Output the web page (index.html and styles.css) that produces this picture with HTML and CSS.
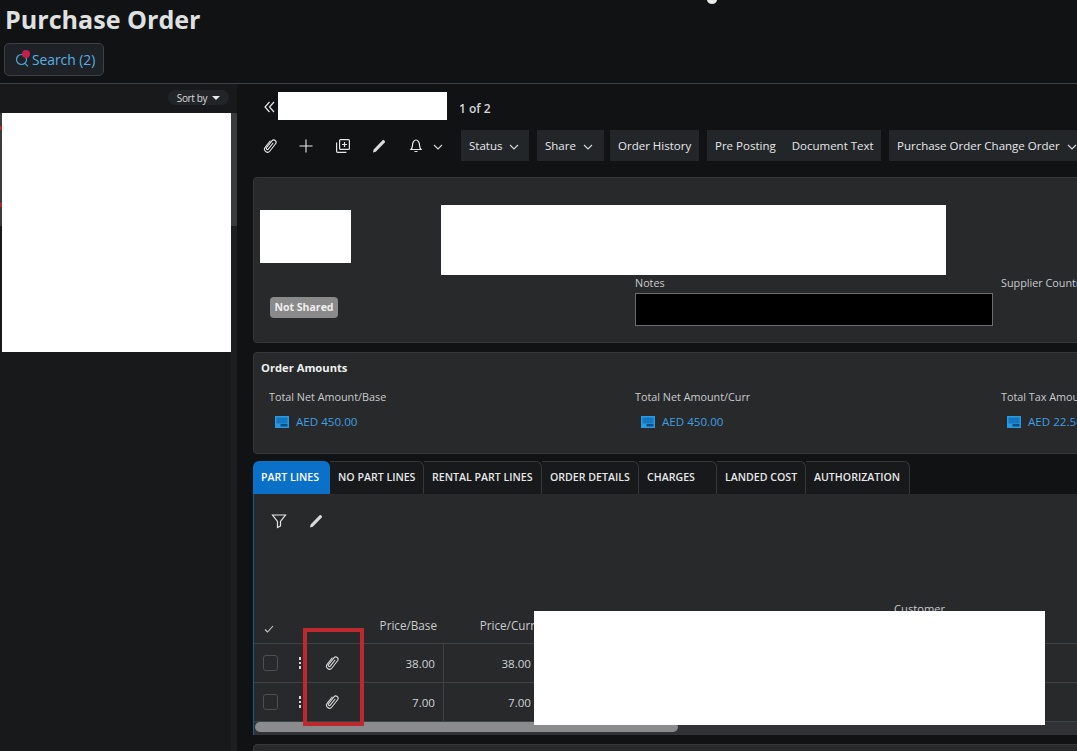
FILE: index.html
```html
<!DOCTYPE html>
<html lang="en">
<head>
<meta charset="utf-8">
<title>Purchase Order</title>
<link rel="stylesheet" href="styles.css">
</head>
<body>
<svg class="defs" width="0" height="0" aria-hidden="true">
  <symbol id="clip" viewBox="0 0 16 16">
    <g transform="rotate(38 8 8)" fill="none" stroke="currentColor" stroke-width="1.100" stroke-linecap="round">
      <path d="M5 4v8a3 3 0 0 0 6 0V2.800a2.300 2.300 0 0 0-4.600 0v8.700a1.100 1.100 0 0 0 2.200 0V4"/>
    </g>
  </symbol>
  <symbol id="pencil" viewBox="0 0 16 16">
    <path d="M2 14.500l.6-3L11.600 2.200a.9.9 0 0 1 1.300 0l.9.9a.9.9 0 0 1 0 1.300L4.800 13.700z" fill="currentColor"/>
  </symbol>
  <symbol id="chev" viewBox="0 0 10 6">
    <path d="M1 1l4 4 4-4" fill="none" stroke="currentColor" stroke-width="1.100"/>
  </symbol>
  <symbol id="money" viewBox="0 0 14 12">
    <rect width="14" height="12" fill="#2a9ae0"/>
    <rect x="1.500" y="1.500" width="11" height="6" fill="#1577c0"/>
    <rect x="5.500" y="8" width="7" height="2.500" fill="#0d4f80"/>
  </symbol>
</svg>

<header class="page-head">
  <h1 class="page-title">Purchase Order</h1>
  <button class="search-btn" type="button">
    <span class="search-icon">
      <svg width="14" height="15" viewBox="0 0 14 15"><circle cx="5.500" cy="7.500" r="5" fill="none" stroke="#4ea6d8" stroke-width="1.200"/><path d="M9 11.300l3 3" stroke="#4ea6d8" stroke-width="1.200"/></svg>
      <span class="search-dot"></span>
    </span>
    Search (2)
  </button>
</header>

<div class="workspace">
  <aside class="sidebar">
    <div class="sort-row">
      <span class="sort-pill">Sort by <span class="caret"></span></span>
    </div>
    <div class="side-edge"><span class="side-mark side-mark-a"></span><span class="side-mark side-mark-b"></span></div>
    <div class="side-track"><div class="side-thumb"></div></div>
  </aside>

  <main class="content">
    <div class="pager">
      <span class="pager-back">
        <svg width="11" height="12" viewBox="0 0 11 12"><path d="M5.500 1L1 6l4.500 5M10 1L5.500 6l4.500 5" fill="none" stroke="#e4e6e7" stroke-width="1.200"/></svg>
      </span>
      <span class="pager-blank"></span>
      <span class="pager-count">1 of 2</span>
    </div>

    <div class="actions">
      <span class="act act-first"><svg width="16" height="16"><use href="#clip"/></svg></span>
      <span class="act act-plus"><svg width="14" height="14" viewBox="0 0 14 14"><path d="M7 .5v13M.5 7h13" stroke="#e8eaeb" stroke-width="1.100"/></svg></span>
      <span class="act act-copy"><svg width="16" height="16" viewBox="0 0 16 16" fill="none" stroke="#e4e6e7" stroke-width="1.200"><rect x="4.600" y="1.600" width="9.800" height="9.800" rx="1"/><path d="M1.600 4.600v8.800a1 1 0 0 0 1 1h8.800M9.500 4v5M7 6.500h5"/></svg></span>
      <span class="act act-pencil"><svg width="16" height="16"><use href="#pencil"/></svg></span>
      <span class="act act-bell">
        <svg width="14" height="15" viewBox="0 0 14 15" fill="none" stroke="#e4e6e7" stroke-width="1.200"><path d="M2 11.500c1-1 1.500-2 1.500-4.500S5 2 7 2s3.500 2.500 3.500 5 .5 3.500 1.500 4.500zM5.500 13.500h3"/></svg>
        <svg class="chev-s" width="10" height="6"><use href="#chev"/></svg>
      </span>
      <span class="btn btn-status">Status <svg class="chev-s" width="10" height="6"><use href="#chev"/></svg></span>
      <span class="btn btn-share">Share <svg class="chev-s" width="10" height="6"><use href="#chev"/></svg></span>
      <span class="btn btn-history">Order History</span>
      <span class="btn btn-double"><span>Pre Posting</span><span>Document Text</span></span>
      <span class="btn btn-change">Purchase Order Change Order <svg class="chev-s" width="10" height="6"><use href="#chev"/></svg></span>
    </div>

    <section class="card card-info">
      <div class="cols">
        <div class="col col-badge"><span class="badge">Not Shared</span></div>
        <div class="col col-notes">
          <div class="label">Notes</div>
          <div class="notes-box"></div>
        </div>
        <div class="col"><div class="label">Supplier Country</div></div>
      </div>
    </section>

    <section class="card card-amounts">
      <h2 class="card-title">Order Amounts</h2>
      <div class="cols">
        <div class="col col-amt-first">
          <div class="label">Total Net Amount/Base</div>
          <div class="amount"><svg width="14" height="12"><use href="#money"/></svg>AED 450.00</div>
        </div>
        <div class="col">
          <div class="label">Total Net Amount/Curr</div>
          <div class="amount"><svg width="14" height="12"><use href="#money"/></svg>AED 450.00</div>
        </div>
        <div class="col">
          <div class="label">Total Tax Amount</div>
          <div class="amount"><svg width="14" height="12"><use href="#money"/></svg>AED 22.50</div>
        </div>
      </div>
    </section>

    <nav class="tabs">
      <span class="tab tab-active tab-1">PART LINES</span>
      <span class="tab tab-2">NO PART LINES</span>
      <span class="tab tab-3">RENTAL PART LINES</span>
      <span class="tab tab-4">ORDER DETAILS</span>
      <span class="tab tab-5">CHARGES</span>
      <span class="tab tab-6">LANDED COST</span>
      <span class="tab tab-7">AUTHORIZATION</span>
    </nav>

    <section class="panel">
      <div class="panel-tools">
        <svg width="16" height="16" viewBox="0 0 16 16"><path d="M1.500 2h13L9.500 8.500V13l-3 1.500V8.500z" fill="none" stroke="#e4e6e7" stroke-width="1.200"/></svg>
        <svg class="tool-pencil" width="16" height="16"><use href="#pencil"/></svg>
      </div>
      <div class="table">
        <div class="row row-head">
          <span class="cell-check"><svg width="10" height="8" viewBox="0 0 10 8"><path d="M1 4.500l2.500 2.500L9 1" fill="none" stroke="#c9cccd" stroke-width="1.100"/></svg></span>
          <span></span>
          <span></span>
          <span class="num">Price/Base</span>
          <span class="num">Price/Curr</span>
          <span></span>
          <span class="head-customer">Customer</span>
        </div>
        <div class="row row-body">
          <span class="cell-check"><span class="box"></span></span>
          <span class="dots"><i></i><i></i><i></i></span>
          <span class="cell-clip"><svg width="16" height="16"><use href="#clip"/></svg></span>
          <span class="num val bordered">38.00</span>
          <span class="num val bordered">38.00</span>
          <span></span><span></span>
        </div>
        <div class="row row-body">
          <span class="cell-check"><span class="box"></span></span>
          <span class="dots"><i></i><i></i><i></i></span>
          <span class="cell-clip"><svg width="16" height="16"><use href="#clip"/></svg></span>
          <span class="num val bordered">7.00</span>
          <span class="num val bordered">7.00</span>
          <span></span><span></span>
        </div>
      </div>
      <div class="h-track"><div class="h-thumb"></div></div>
    </section>

    <section class="card card-next"></section>
  </main>
</div>

<div class="cover cover-side"></div>
<div class="cover cover-logo"></div>
<div class="cover cover-name"></div>
<div class="cover cover-table"></div>
<div class="annotation"></div>
<div class="cursor-dot"></div>
</body>
</html>
```

FILE: styles.css
```css
* { box-sizing: border-box; }
html, body { height: 100%; }
body {
  margin: 0;
  width: 1077px;
  height: 751px;
  overflow: hidden;
  position: relative;
  background: #111213;
  color: #e2e4e5;
  font-family: "Open Sans", "Noto Sans", sans-serif;
  font-size: 12px;
}
.defs { position: absolute; }

.page-head { height: 84px; padding: 3px 4px 0; border-bottom: 1px solid #3a4045; }
.page-title {
  margin: 0 0 0 1px;
  font-size: 25.100px;
  line-height: 32px;
  font-weight: 700;
  color: #dfe0e0;
}
.search-btn {
  margin-top: 8px;
  height: 33px;
  width: 100px;
  padding: 0 0 0 11px;
  display: flex;
  align-items: center;
  gap: 1px;
  background: #1e2226;
  border: 1px solid #3b4147;
  border-radius: 5px;
  color: #58b0e4;
  font: 13.800px "Open Sans", sans-serif;
}
.search-icon { position: relative; display: flex; width: 15px; height: 15px; }
.search-dot {
  position: absolute;
  left: 6px; top: -2px;
  width: 8px; height: 8px;
  border-radius: 50%;
  background: #c2204f;
}

.workspace { display: flex; height: 667px; }
.sidebar { width: 237px; flex: none; position: relative; background: #18191b; }
.sort-row { height: 29px; display: flex; justify-content: flex-end; align-items: center; padding: 0 8px 2px 0; }
.sort-pill {
  height: 15px;
  width: 61px;
  display: flex;
  align-items: center;
  justify-content: center;
  gap: 5px;
  border-radius: 8px;
  background: #222528;
  font-size: 10px;
  letter-spacing: -.35px;
  color: #d8dadb;
}
.caret { border: 4px solid transparent; border-top: 4px solid #e8e9ea; border-bottom: 0; }
.side-edge { position: absolute; left: 0; top: 29px; width: 2px; height: 113px; background: #3a3b3d; }
.side-mark { position: absolute; left: 0; width: 2px; height: 4px; background: #b5252b; }
.side-mark-a { top: 13px; }
.side-mark-b { top: 90px; }
.side-track { position: absolute; right: 0; top: 29px; width: 6px; height: 638px; background: #1d1e20; }
.side-thumb { width: 100%; height: 113px; background: #3a3b3d; }

.content { flex: 1; min-width: 0; padding: 7px 0 0 16px; overflow: hidden; }

.pager { height: 30px; display: flex; align-items: center; padding-left: 11px; }
.pager-back { width: 14px; display: flex; padding-top: 2px; }
.pager-blank { width: 169px; height: 28px; background: #fff; }
.pager-count { margin-left: 12px; padding-top: 4px; font-size: 12px; font-weight: 600; color: #d5d7d8; }

.actions { display: flex; align-items: center; height: 31px; margin-top: 9px; white-space: nowrap; width: 900px; }
.act { color: #e4e6e7; display: flex; align-items: center; flex: none; }
.act-first { padding-left: 9px; width: 46px; }
.act-plus { width: 36px; }
.act-copy { width: 36px; }
.act-pencil { width: 38px; color: #d8dadb; }
.act-bell { width: 52px; gap: 10px; }
.act-bell .chev-s { margin-top: 2px; }
.btn {
  height: 31px;
  flex: none;
  display: flex;
  align-items: center;
  padding-left: 8px;
  margin-right: 8px;
  background: #232629;
  color: #e6e8e9;
  font-size: 11.500px;
}
.chev-s { color: #d8dadb; margin-left: 7px; margin-top: 2px; }
.act .chev-s { margin-left: 0; }
.btn-status { width: 68px; }
.btn-share { width: 67px; margin-right: 6px; }
.btn-history { width: 89px; }
.btn-double { width: 174px; gap: 16px; }
.btn-change { width: 220px; margin-right: 0; }

.card { background: #27292b; border: 1px solid #35383a; border-radius: 4px; width: 900px; }
.cols { display: grid; grid-template-columns: 381px 366px 1fr; }
.label { font-size: 10.800px; line-height: 14px; color: #c9cbcc; white-space: nowrap; }

.card-info { height: 166px; margin-top: 16px; padding-top: 98px; }
.col-badge { padding: 21px 0 0 16px; }
.badge {
  display: inline-block;
  height: 21px;
  width: 68px;
  line-height: 20px;
  text-align: center;
  background: #8a8a8a;
  border-radius: 4px;
  font-size: 10.500px;
  font-weight: 700;
  color: #eeeeee;
}
.notes-box { width: 358px; height: 33px; margin-top: 3px; background: #000; border: 1px solid #6b6d6e; }

.card-amounts { height: 102px; margin-top: 9px; padding-top: 6px; }
.card-title { margin: 0 0 14px 7px; font-size: 11.200px; line-height: 17px; font-weight: 700; color: #eef0f0; }
.col-amt-first { padding-left: 15px; }
.amount { display: flex; align-items: center; gap: 7px; margin-top: 10px; padding-left: 6px; line-height: 16px; font-size: 11.600px; color: #3f9fe0; white-space: nowrap; }

.tabs { display: flex; height: 33px; margin-top: 7px; }
.tab {
  height: 33px;
  padding: 0 0 2px 8px;
  display: flex;
  align-items: center;
  font-size: 10.600px;
  font-weight: 600;
  white-space: nowrap;
  color: #e6e8e9;
  background: #18191b;
  border: solid #35383a;
  border-width: 1px 1px 0 0;
  border-radius: 0 6px 0 0;
}
.tab-active { background: #0a70c8; color: #fff; border: 0; border-radius: 6px 6px 0 0; }
.tab-1 { width: 77px; }
.tab-2 { width: 94px; }
.tab-3 { width: 118px; }
.tab-4 { width: 97px; }
.tab-5 { width: 78px; }
.tab-6 { width: 89px; }
.tab-7 { width: 104px; }

.panel { width: 900px; height: 241px; background: #27292b; border-left: 1px solid #0b5d9e; display: flex; flex-direction: column; }
.panel-tools { height: 50px; padding: 19px 0 0 17px; display: flex; align-items: flex-start; gap: 21px; }
.tool-pencil { color: #d8dadb; }

.table { height: 178px; display: flex; flex-direction: column; justify-content: flex-end; }
.row { display: grid; grid-template-columns: 30px 28px 58px 74px 96px 354px 1fr; align-items: center; }
.row-head { flex: 1; height: 100px; border-bottom: 1px solid #3c4447; position: relative; }
.row-head > span { align-self: end; padding-bottom: 10px; font-size: 11.700px; color: #c9cbcc; }
.row-head .cell-check { padding-bottom: 10px; }
.row-head .num:nth-child(4) { padding-right: 7px; }
.row-head .num:nth-child(5) { padding-right: 5px; }
.row-head .head-customer { align-self: start; padding-top: 57px; font-size: 11.200px; white-space: nowrap; }
.row-body { height: 39px; border-bottom: 1px solid #3c4447; }
.cell-check { display: flex; justify-content: center; }
.box { width: 15px; height: 16px; border: 1px solid #4a5054; border-radius: 3px; margin-left: 2px; }
.dots { display: flex; flex-direction: column; align-items: center; gap: 2px; padding-left: 4px; }
.dots i { width: 2.500px; height: 2.500px; background: #d5d7d8; }
.cell-clip { display: flex; justify-content: center; color: #d6d8d9; padding-right: 18px; }
.num { text-align: right; white-space: nowrap; font-size: 11.600px; }
.val { color: #d0d2d3; line-height: 39px; height: 38px; padding-right: 8px; }
.bordered { border-right: 1px solid #3c4447; }

.h-track { height: 13px; background: #303235; }
.h-thumb { width: 423px; height: 10px; margin-left: 1px; background: #8a8b8c; border-radius: 5px; }

.card-next { height: 30px; margin-top: 9px; }

.cover { position: absolute; background: #fff; }
.cover-side { left: 2px; top: 113px; width: 229px; height: 239px; }
.cover-logo { left: 260px; top: 210px; width: 91px; height: 53px; }
.cover-name { left: 441px; top: 205px; width: 505px; height: 70px; }
.cover-table { left: 534px; top: 611px; width: 511px; height: 114px; }
.annotation { position: absolute; left: 303px; top: 628px; width: 61px; height: 98px; border: 4px solid #bc2a30; }
.cursor-dot { position: absolute; left: 707px; top: -4px; width: 10px; height: 8px; border-radius: 50%; background: #e8e8e8; }
```
